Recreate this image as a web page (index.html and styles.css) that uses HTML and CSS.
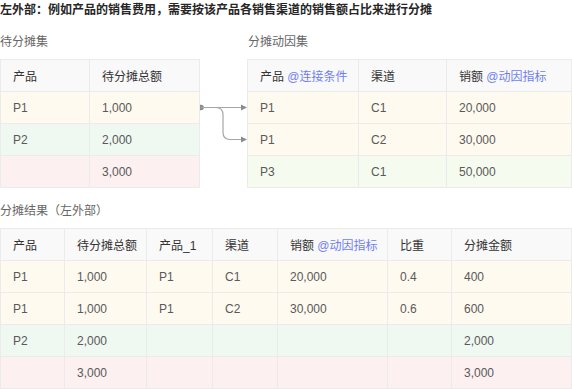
FILE: index.html
```html
<!DOCTYPE html>
<html lang="zh">
<head>
<meta charset="utf-8">
<link rel="stylesheet" href="styles.css">
</head>
<body>
<div class="title">左外部：例如产品的销售费用，需要按该产品各销售渠道的销售额占比来进行分摊</div>
<div class="top-row">
  <section class="block block-a">
    <div class="label">待分摊集</div>
    <table class="grid t1">
      <colgroup><col class="c88"><col></colgroup>
      <tr class="head"><td>产品</td><td>待分摊总额</td></tr>
      <tr class="yel"><td>P1</td><td>1,000</td></tr>
      <tr class="grn"><td>P2</td><td>2,000</td></tr>
      <tr class="pnk"><td></td><td>3,000</td></tr>
    </table>
  </section>
  <div class="link">
    <svg width="47" height="129" viewBox="0 0 47 129">
      <circle cx="1" cy="48.5" r="2.8" fill="#8c8c8c"/>
      <path d="M1 48.5 H42" stroke="#a6a6a6" stroke-width="1.2" fill="none"/>
      <path d="M1 48.5 H16 Q23 48.5 23 56 V73 Q23 80.5 30 80.5 H42" stroke="#a6a6a6" stroke-width="1.2" fill="none"/>
      <path d="M41 45.5 L47 48.5 L41 51.5 Z" fill="#8c8c8c"/>
      <path d="M41 77.5 L47 80.5 L41 83.5 Z" fill="#8c8c8c"/>
    </svg>
  </div>
  <section class="block block-b">
    <div class="label">分摊动因集</div>
    <table class="grid t2">
      <colgroup><col class="c110"><col class="c88w"><col></colgroup>
      <tr class="head"><td>产品 <span class="tag">@连接条件</span></td><td>渠道</td><td>销额 <span class="tag">@动因指标</span></td></tr>
      <tr class="yel"><td>P1</td><td>C1</td><td>20,000</td></tr>
      <tr class="yel"><td>P1</td><td>C2</td><td>30,000</td></tr>
      <tr class="lime"><td>P3</td><td>C1</td><td>50,000</td></tr>
    </table>
  </section>
</div>
<section class="block block-c">
  <div class="label">分摊结果（左外部）</div>
  <table class="grid t3">
    <colgroup><col class="w64"><col class="w82"><col class="w66"><col class="w65"><col class="w110"><col class="w64"><col></colgroup>
    <tr class="head"><td>产品</td><td>待分摊总额</td><td>产品_1</td><td>渠道</td><td>销额 <span class="tag">@动因指标</span></td><td>比重</td><td>分摊金额</td></tr>
    <tr class="yel"><td>P1</td><td>1,000</td><td>P1</td><td>C1</td><td>20,000</td><td>0.4</td><td>400</td></tr>
    <tr class="yel"><td>P1</td><td>1,000</td><td>P1</td><td>C2</td><td>30,000</td><td>0.6</td><td>600</td></tr>
    <tr class="grn"><td>P2</td><td>2,000</td><td></td><td></td><td></td><td></td><td>2,000</td></tr>
    <tr class="pnk"><td></td><td>3,000</td><td></td><td></td><td></td><td></td><td>3,000</td></tr>
  </table>
</section>
</body>
</html>
```
FILE: styles.css
```css
html, body {
  margin: 0;
  padding: 0;
  background: #ffffff;
}
body {
  width: 572px;
  font-family: "Liberation Sans", "Noto Sans CJK SC", sans-serif;
  font-size: 12px;
  color: #333333;
}
.title {
  font-weight: bold;
  line-height: 20px;
  color: #262626;
}
.top-row {
  display: flex;
  align-items: flex-end;
  margin-top: 12px;
}
.label {
  line-height: 20px;
  color: #666666;
  margin-bottom: 7px;
}
.block-a { width: 200px; flex: none; }
.block-b { width: 325px; flex: none; }
.block-b .label { padding-left: 1px; }
.link {
  width: 47px;
  height: 129px;
  flex: none;
}
.link svg { display: block; }
.block-c { margin-top: 13px; }
.grid {
  border-collapse: collapse;
  table-layout: fixed;
  width: 100%;
}
.grid td {
  border: 1px solid #ebebeb;
  height: 32px;
  padding: 0 0 0 12px;
  box-sizing: border-box;
  color: #595959;
  white-space: nowrap;
  vertical-align: middle;
}
.grid .head td {
  background: #f9f9f9;
  color: #333333;
}
.tag { color: #6f7ef5; }
.yel td { background: #fffaf0; }
.grn td { background: #eff8f1; }
.pnk td { background: #fdf0f0; }
.lime td { background: #f5fcef; }
.c88 { width: 89px; }
.c110 { width: 111px; }
.c88w { width: 88px; }
.w64 { width: 64px; }
.w82 { width: 82px; }
.w66 { width: 66px; }
.w65 { width: 65px; }
.w110 { width: 110px; }
```
